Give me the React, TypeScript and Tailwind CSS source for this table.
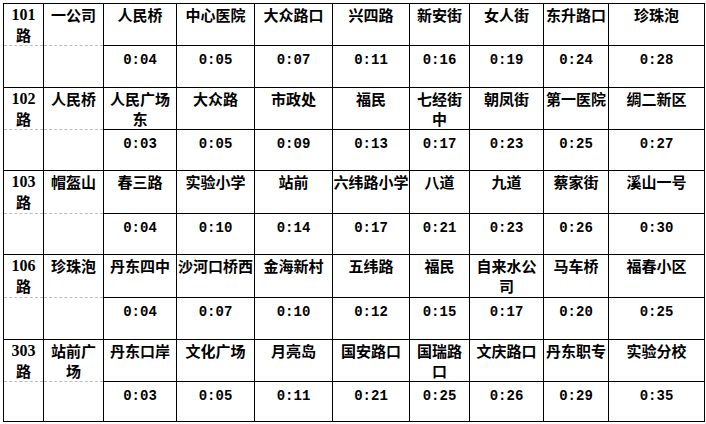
import { Fragment } from 'react'

interface Route {
  no: string
  from: string
  stops: [string, string][]
}

const routes: Route[] = [
  {
    no: '101',
    from: '一公司',
    stops: [
      ['人民桥', '0:04'], ['中心医院', '0:05'], ['大众路口', '0:07'], ['兴四路', '0:11'],
      ['新安街', '0:16'], ['女人街', '0:19'], ['东升路口', '0:24'], ['珍珠泡', '0:28'],
    ],
  },
  {
    no: '102',
    from: '人民桥',
    stops: [
      ['人民广场东', '0:03'], ['大众路', '0:05'], ['市政处', '0:09'], ['福民', '0:13'],
      ['七经街中', '0:17'], ['朝凤街', '0:23'], ['第一医院', '0:25'], ['绸二新区', '0:27'],
    ],
  },
  {
    no: '103',
    from: '帽盔山',
    stops: [
      ['春三路', '0:04'], ['实验小学', '0:10'], ['站前', '0:14'], ['六纬路小学', '0:17'],
      ['八道', '0:21'], ['九道', '0:23'], ['蔡家街', '0:26'], ['溪山一号', '0:30'],
    ],
  },
  {
    no: '106',
    from: '珍珠泡',
    stops: [
      ['丹东四中', '0:04'], ['沙河口桥西', '0:07'], ['金海新村', '0:10'], ['五纬路', '0:12'],
      ['福民', '0:15'], ['自来水公司', '0:17'], ['马车桥', '0:20'], ['福春小区', '0:25'],
    ],
  },
  {
    no: '303',
    from: '站前广场',
    stops: [
      ['丹东口岸', '0:03'], ['文化广场', '0:05'], ['月亮岛', '0:11'], ['国安路口', '0:21'],
      ['国瑞路口', '0:25'], ['文庆路口', '0:26'], ['丹东职专', '0:29'], ['实验分校', '0:35'],
    ],
  },
]

function LeadCell({ children }: { children?: React.ReactNode }) {
  // route / origin cell: dashed grey rule instead of the black bottom line
  return (
    <div className="flex flex-col border-r border-black">
      <div className="pt-[1px] text-center leading-[20px]">{children}</div>
      <div className="mt-auto border-t border-dashed border-[#bdbdbd]" />
    </div>
  )
}

export default function App() {
  return (
    <div className="min-h-screen bg-white pl-[3px] pt-[3px] font-['Noto_Sans_CJK_SC',sans-serif] text-[15px] font-bold text-black">
      <div className="grid w-max grid-cols-[40px_60px_73px_78px_78px_77px_60px_74px_65px_96px] grid-rows-[42px_42px_42px_41px_43px_41px_43px_42px_42px_40px] border-l border-t border-black">
        {routes.map(r => (
          <Fragment key={r.no}>
            <LeadCell>
              <div className="font-['Liberation_Serif',serif] text-[16px]">{r.no}</div>
              <div>路</div>
            </LeadCell>
            <LeadCell>{r.from}</LeadCell>
            {r.stops.map(([name], i) => (
              <div key={'s' + i} className="border-b border-r border-black pt-[1px] text-center leading-[20px]">
                {name}
              </div>
            ))}
            <div className="border-b border-r border-black" />
            <div className="border-b border-r border-black" />
            {r.stops.map(([, t], i) => (
              <div key={'t' + i} className="border-b border-r border-black pt-[4px] text-center font-['Liberation_Mono',monospace] text-[14px] leading-[20px]">
                {t}
              </div>
            ))}
          </Fragment>
        ))}
      </div>
    </div>
  )
}
